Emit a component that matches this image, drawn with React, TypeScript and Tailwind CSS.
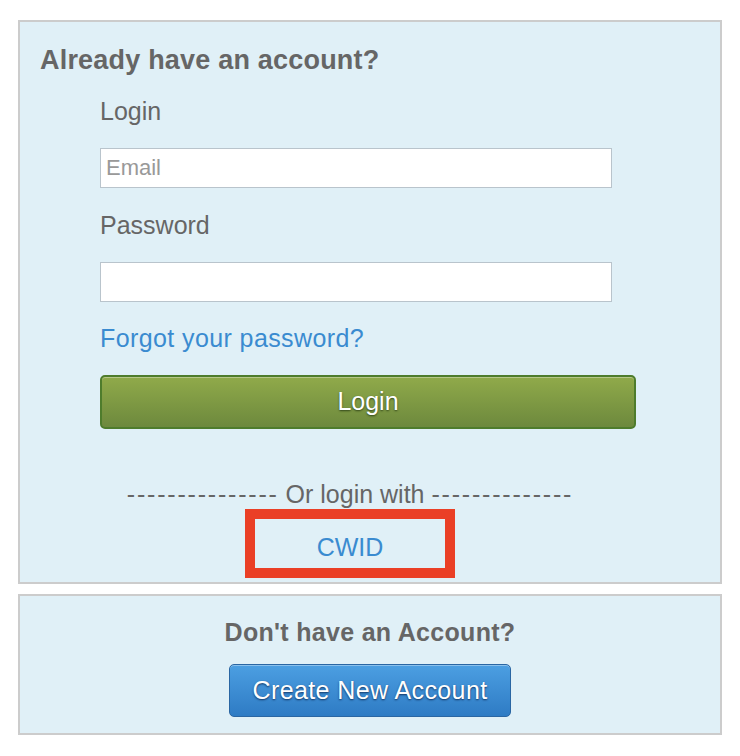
import React from 'react';

const LEFT_DASHES = '---------------';
const RIGHT_DASHES = '--------------';

const App = () => {
  return (
    <div className="min-h-[756px] w-[740px] bg-white pt-5 pl-[18px] font-['Liberation_Sans',Arial,sans-serif]">
      {/* login panel */}
      <div className="w-[704px] border-2 border-[#cccccc] bg-[#e0f0f7] pt-[23px] pb-1">
        <h2 className="pl-5 text-[27px] leading-[30px] font-bold tracking-[0.2px] text-[#666666]">
          Already have an account?
        </h2>

        <div className="ml-[80px] mt-[21px] w-[536px]">
          <label className="block text-[25px] leading-[30px] text-[#666666]">Login</label>
          <input
            type="text"
            placeholder="Email"
            className="mt-[22px] block h-10 w-[512px] border border-[#b9c4cc] bg-white px-[5px] text-[22px] text-[#555555] placeholder:text-[#999999] outline-none"
          />

          <label className="mt-[22px] block text-[25px] leading-[30px] text-[#666666]">Password</label>
          <input
            type="password"
            className="mt-[22px] block h-10 w-[512px] border border-[#b9c4cc] bg-white px-[5px] text-[22px] outline-none"
          />

          <a href="#" className="mt-[21px] block text-[25px] leading-[30px] tracking-[0.4px] text-[#3a8bd0]">
            Forgot your password?
          </a>

          <button className="mt-[22px] flex h-[54px] w-[536px] items-center justify-center rounded-[5px] border-2 border-[#4e7c2c] bg-gradient-to-b from-[#90aa4a] to-[#6d893d] text-[25px] text-white shadow-[inset_0_1px_0_rgba(255,255,255,0.35)] [text-shadow:0_1px_2px_rgba(40,60,20,0.9)]">
            Login
          </button>

          <div className="mt-[50px] w-[500px] text-center">
            <div className="text-[25px] leading-[30px] text-[#666666]">
              <span className="tracking-[1.8px]">{LEFT_DASHES}</span> Or login with{' '}
              <span className="tracking-[1.8px]">{RIGHT_DASHES}</span>
            </div>
            <div className="mx-auto w-[210px] border-[10px] border-[#ea3f26] pt-[13px] pb-[6px]">
              <a href="#" className="block text-[25px] leading-[30px] text-[#3a8bd0]">CWID</a>
            </div>
          </div>
        </div>
      </div>

      {/* sign up panel */}
      <div className="mt-[10px] flex w-[704px] flex-col items-center border-2 border-[#cccccc] bg-[#e0f0f7] pt-[22px] pb-4">
        <h3 className="text-[25px] leading-[28px] font-bold tracking-[0.3px] text-[#666666]">
          Don&apos;t have an Account?
        </h3>
        <button className="mt-[18px] flex h-[53px] w-[282px] items-center justify-center rounded-[5px] border border-[#2a66a3] bg-gradient-to-b from-[#4c9fe2] to-[#2e7bc4] text-[25px] tracking-[0.4px] text-white shadow-[inset_0_1px_0_rgba(255,255,255,0.35)] [text-shadow:0_1px_2px_rgba(15,45,90,0.95)]">
          Create New Account
        </button>
      </div>
    </div>
  );
};

export default App;
